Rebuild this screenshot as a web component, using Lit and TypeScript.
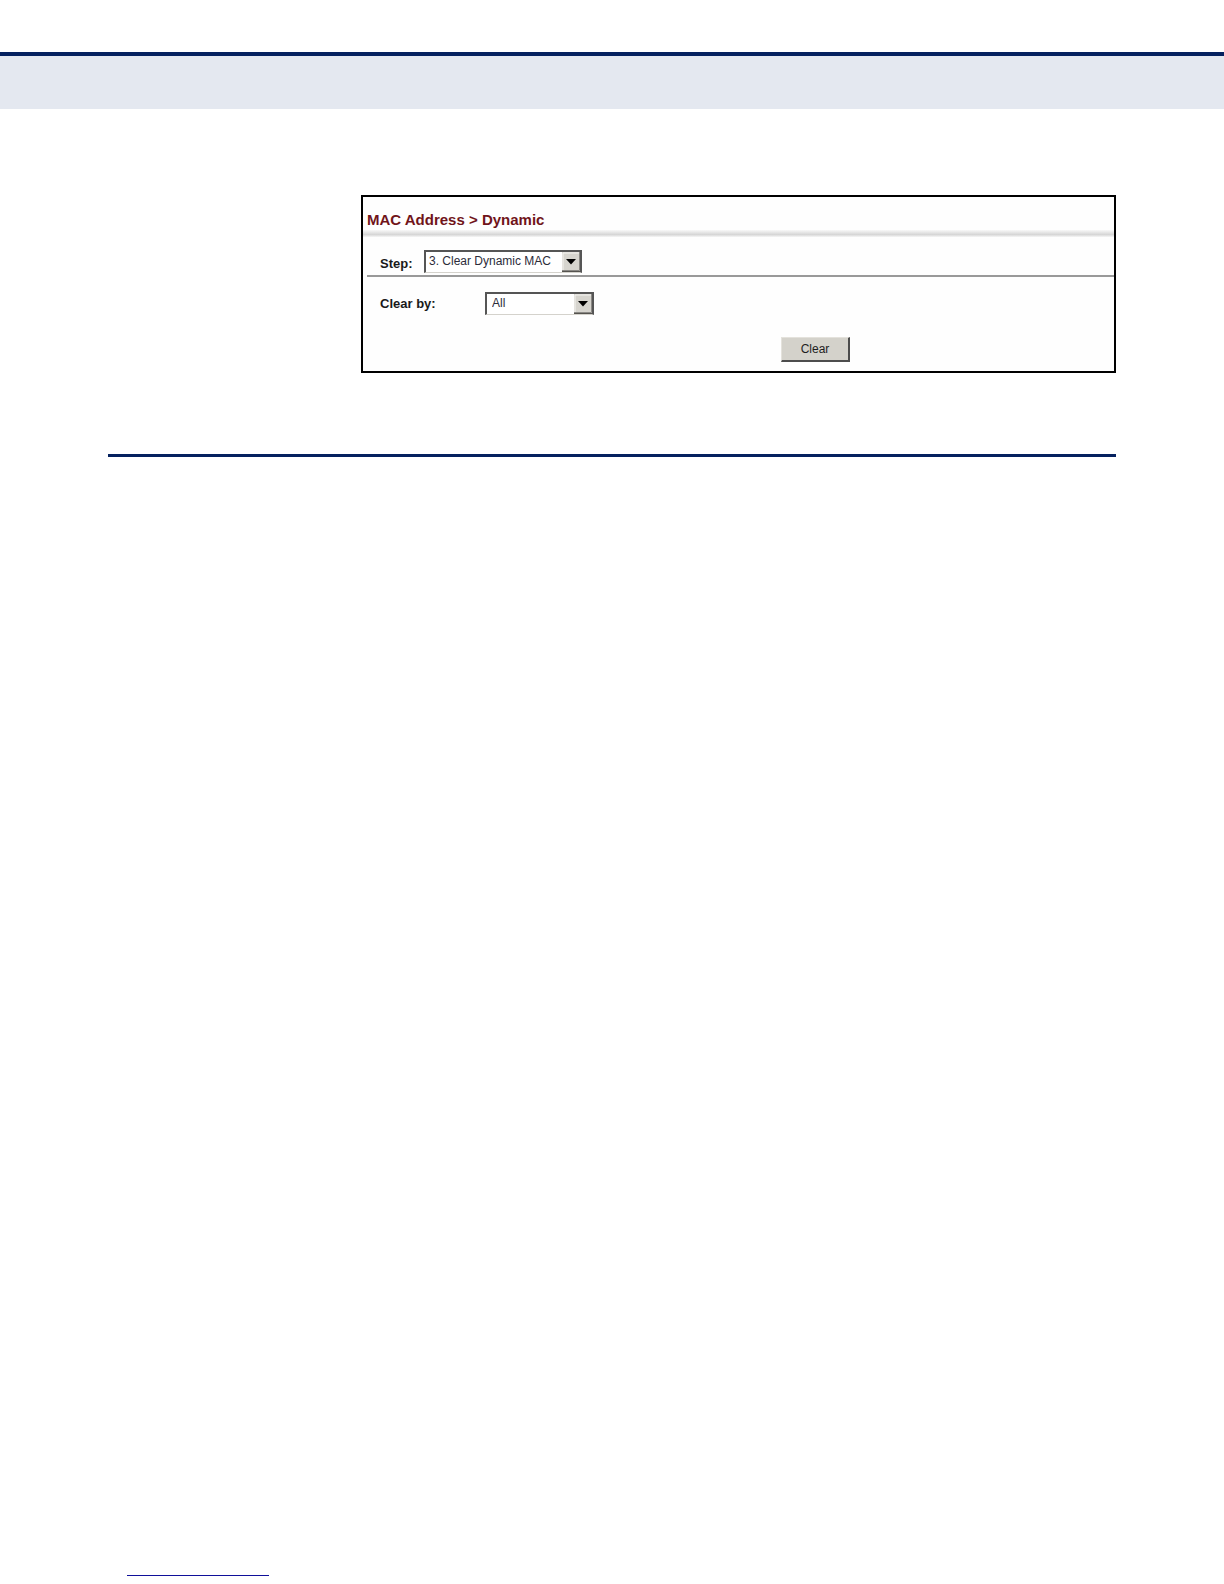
import { LitElement, html, css } from "lit";
import { customElement, property } from "lit/decorators.js";

@customElement("classic-select")
class ClassicSelect extends LitElement {
  @property() label = "";
  @property({ type: Array }) options: string[] = [];
  @property() value = "";

  static styles = css`
    :host {
      display: block;
    }
    .field {
      display: grid;
      grid-template-columns: var(--label-width, auto) var(--box-width, 158px);
      align-items: center;
      justify-content: start;
    }
    .label {
      font-size: 13px;
      line-height: 16px;
      font-weight: bold;
      color: #1a1a1a;
      padding-top: var(--label-drop, 0);
    }
    .box {
      position: relative;
      display: flex;
    }
    select {
      appearance: none;
      box-sizing: border-box;
      width: 100%;
      height: 23px;
      margin: 0;
      padding: 0 20px 2px var(--text-inset, 3px);
      border: 2px solid #555;
      border-bottom: 1px solid #d4d2cc;
      border-radius: 0;
      background: #fff;
      color: #2c2c3a;
      font: 12px "Liberation Sans", Arial, sans-serif;
    }
    .arrow {
      position: absolute;
      top: 2px;
      right: 2px;
      width: 18px;
      height: 20px;
      pointer-events: none;
    }
  `;

  render() {
    return html`
      <div class="field">
        <label class="label" for="control">${this.label}</label>
        <div class="box">
          <select id="control">
            ${this.options.map(
              (o) => html`<option ?selected=${o === this.value}>${o}</option>`
            )}
          </select>
          <svg class="arrow" viewBox="0 0 18 20" aria-hidden="true">
            <rect width="18" height="20" fill="#d6d4ce" />
            <path d="M1 18V1h16" fill="none" stroke="#f4f3f0" stroke-width="1" />
            <path d="M0 18.5h17.5V0" fill="none" stroke="#8a8884" stroke-width="1" />
            <path d="M0 19.5h18" stroke="#55534f" stroke-width="1" />
            <path d="M4 7h10L9 12.5z" fill="#000" />
          </svg>
        </div>
      </div>
    `;
  }
}

@customElement("app-root")
class AppRoot extends LitElement {
  static styles = css`
    :host {
      display: block;
      font-family: "Liberation Sans", Arial, sans-serif;
      background: #fff;
    }
    .page {
      display: flex;
      flex-direction: column;
      min-height: 100vh;
      box-sizing: border-box;
      padding: 52px 0 8px;
    }
    .banner {
      height: 53px;
      border-top: 4px solid #05215f;
      background: #e4e8f0;
    }
    .content {
      padding: 86px 108px 0;
    }
    .panel {
      margin-left: 253px;
      border: 2px solid #000;
      background: #fefefe;
      padding-bottom: 9px;
    }
    .title {
      margin: 0;
      padding: 15px 4px 2px;
      font-size: 15px;
      line-height: 16px;
      font-weight: bold;
      color: #70141a;
    }
    .shade {
      height: 7px;
      background: linear-gradient(#f8f8f8, #d6d6d6 65%, #f6f6f6);
    }
    .step {
      margin-left: 4px;
      padding: 13px 0 2px 13px;
      border-bottom: 2px solid #999;
      --label-width: 44px;
      --box-width: 158px;
      --label-drop: 4px;
    }
    .clear-by {
      padding: 15px 0 0 17px;
      --label-width: 105px;
      --box-width: 109px;
      --text-inset: 5px;
    }
    .actions {
      display: flex;
      padding: 22px 0 0 418px;
    }
    button {
      box-sizing: border-box;
      width: 69px;
      height: 25px;
      padding: 0;
      border: 1px solid #e4e2dc;
      border-right: 2px solid #4c4c4c;
      border-bottom: 2px solid #4c4c4c;
      border-radius: 0;
      background: #d4d2cb;
      color: #1e1e1e;
      font: 12px "Liberation Sans", Arial, sans-serif;
    }
    .divider {
      height: 3px;
      margin: 81px 0 0;
      border: 0;
      background: #05215f;
    }
    .footer {
      margin-top: auto;
      padding-left: 127px;
    }
    .underline {
      width: 142px;
      border-bottom: 1px solid #10109a;
    }
  `;

  render() {
    return html`
      <div class="page">
        <header class="banner"></header>
        <main class="content">
          <section class="panel">
            <h1 class="title">MAC Address &gt; Dynamic</h1>
            <div class="shade"></div>
            <classic-select
              class="step"
              label="Step:"
              .options=${["3. Clear Dynamic MAC"]}
              value="3. Clear Dynamic MAC"
            ></classic-select>
            <classic-select
              class="clear-by"
              label="Clear by:"
              .options=${["All"]}
              value="All"
            ></classic-select>
            <div class="actions"><button type="button">Clear</button></div>
          </section>
          <hr class="divider" />
        </main>
        <footer class="footer"><div class="underline"></div></footer>
      </div>
    `;
  }
}
